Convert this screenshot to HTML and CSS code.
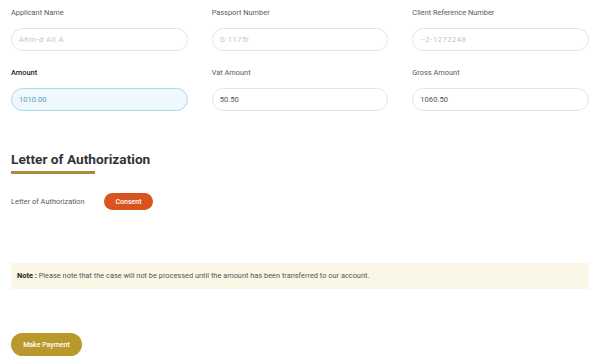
FILE: index.html
```html
<!DOCTYPE html>
<html lang="en">
<head>
<meta charset="utf-8">
<title>Payment</title>
<link rel="stylesheet" href="styles.css">
</head>
<body>
<div class="page">
  <div class="grid">
    <div class="field">
      <div class="label">Applicant Name</div>
      <div class="input blur">Ahm-d Ali A</div>
    </div>
    <div class="field">
      <div class="label">Passport Number</div>
      <div class="input blur">G  1175l</div>
    </div>
    <div class="field">
      <div class="label">Client Reference Number</div>
      <div class="input blur">--2-1272248</div>
    </div>
    <div class="field">
      <div class="label strong">Amount</div>
      <div class="input active">1010.00</div>
    </div>
    <div class="field">
      <div class="label">Vat Amount</div>
      <div class="input">50.50</div>
    </div>
    <div class="field">
      <div class="label">Gross Amount</div>
      <div class="input">1060.50</div>
    </div>
  </div>

  <h2 class="heading">Letter of Authorization</h2>
  <div class="underline"></div>

  <div class="loa-row">
    <span class="loa-label">Letter of Authorization</span>
    <button class="consent">Consent</button>
  </div>

  <div class="note"><b>Note :</b> Please note that the case will not be processed until the amount has been transferred to our account.</div>

  <button class="pay">Make Payment</button>
</div>
</body>
</html>
```

FILE: styles.css
```css
html, body {
  margin: 0;
  padding: 0;
  background: #fff;
}
body {
  font-family: Roboto, "Liberation Sans", Arial, sans-serif;
  color: #555;
}
.page {
  padding: 8px 6px 0 11px;
  display: flex;
  flex-direction: column;
  align-items: flex-start;
}
.grid {
  width: 578px;
  display: grid;
  grid-template-columns: repeat(3, 1fr);
  column-gap: 24px;
  row-gap: 17px;
}
.field {
  display: flex;
  flex-direction: column;
}
.label {
  font-size: 7.4px;
  line-height: 10px;
  height: 10px;
  margin-bottom: 10px;
  color: #5a5a5a;
}
.label.strong {
  color: #222;
  font-weight: 500;
}
.input {
  box-sizing: border-box;
  height: 23px;
  border: 1px solid #e4e4e4;
  border-radius: 12px;
  padding: 0 7px;
  font-size: 7.6px;
  line-height: 21px;
  color: #555;
}
.input.blur {
  color: #c4c4c4;
  letter-spacing: 0.5px;
}
.input.active {
  background: #eef8fd;
  border-color: #a9daf0;
  color: #5b9bbd;
}
.heading {
  margin: 38px 0 0 0;
  font-size: 13.7px;
  line-height: 20px;
  font-weight: 700;
  color: #333;
}
.underline {
  width: 84px;
  height: 3px;
  background: #a98b3d;
  margin-top: 2px;
}
.loa-row {
  margin-top: 19px;
  display: flex;
  align-items: center;
  height: 17px;
}
.loa-label {
  font-size: 7.4px;
  color: #5a5a5a;
  width: 93px;
}
.consent {
  width: 49px;
  height: 17px;
  border: none;
  border-radius: 9px;
  background: #d9531e;
  color: #fff;
  font-family: inherit;
  font-size: 7px;
  font-weight: 500;
  padding: 0;
}
.note {
  margin-top: 53px;
  box-sizing: border-box;
  width: 578px;
  height: 26px;
  background: #fbf7e7;
  padding: 0 6px;
  font-size: 7.4px;
  line-height: 26px;
  color: #555;
}
.note b {
  color: #222;
  font-weight: 700;
}
.pay {
  margin-top: 44px;
  width: 71px;
  height: 23px;
  border: none;
  border-radius: 12px;
  background: #b9982c;
  color: #fff;
  font-family: inherit;
  font-size: 7px;
  font-weight: 500;
  padding: 0;
}
```
